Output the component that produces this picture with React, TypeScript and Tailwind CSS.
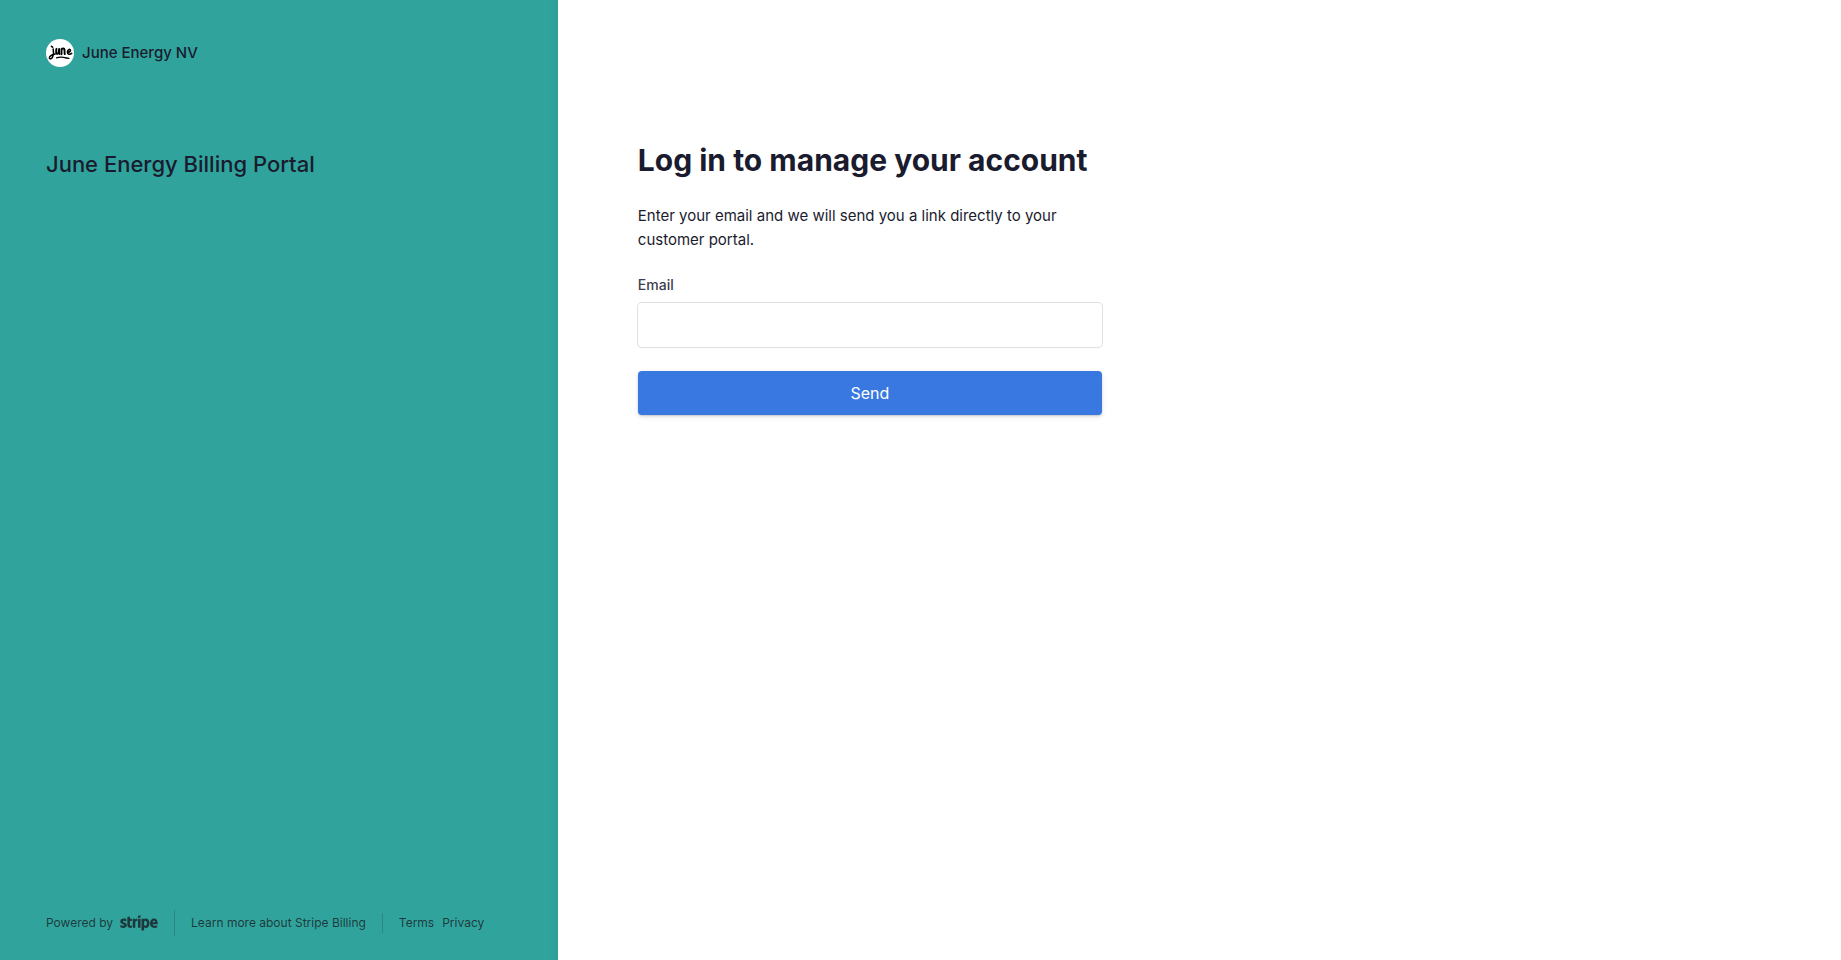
import { FaStripe } from "react-icons/fa";

const JuneLogo = () => {
  return (
    <svg
      viewBox="0 0 28 28"
      className="size-7 shrink-0 rounded-full bg-white"
      fill="none"
      stroke="#000"
      strokeWidth="1.9"
      strokeLinecap="round"
      strokeLinejoin="round"
      aria-hidden="true"
    >
      <path
        strokeWidth="1.5"
        d="M7.200 10c.5 2.600.3 6.200-.7 8.200-1 2-2.900 2.200-3.100.7-.1-2 2.200-3.200 5.800-4"
      />
      <path strokeWidth="1.500" d="M5.400 7.300l1.200.9" />
      <path d="M10.500 9.800c-.6 2-.6 5.200.5 5.200s1.800-2.600 2.100-5c-.1 2.200-.1 4 .4 5" />
      <path d="M15.500 15.200v-5c.9-.9 2.800-1 3 .5.200 1.400-.2 3.400.3 4.400" />
      <path
        strokeWidth="1.600"
        d="M21.400 13.300c1.600.2 3.400-.9 3-2.300-.6-1.300-2.900-.4-3 2 0 2.600 2.500 2.700 4.300 1.400"
      />
      <path strokeWidth="1.200" d="M10.500 18.900c2-.8 5-1 7-.5s3.500.8 5.500.9" />
    </svg>
  );
};

const Sidebar = () => {
  return (
    <aside className="flex w-full flex-col bg-[#30a49c] px-[46px] pt-[39px] pb-6 shadow-[inset_-10px_0_8px_-8px_rgba(0,0,0,0.06)] lg:w-[30.3%]">
      <div className="flex items-center gap-2">
        <JuneLogo />
        <span className="text-[15px] font-medium">June Energy NV</span>
      </div>

      <h2 className="mt-20 text-[22px] leading-[34px] font-medium">
        June Energy Billing Portal
      </h2>

      <footer className="mt-auto flex items-center whitespace-nowrap text-xs text-[#1a1b25]/80">
        <a
          href="#stripe"
          className="flex h-[26px] items-center gap-[7px] border-r border-[#1a1b25]/20 pr-4"
        >
          Powered by
          <FaStripe className="h-[30px] w-[38px]" aria-label="Stripe" />
        </a>
        <a
          href="#billing"
          className="border-r border-[#1a1b25]/20 px-4 leading-5"
        >
          Learn more about Stripe Billing
        </a>
        <nav className="flex gap-2 pl-4">
          <a href="#terms">Terms</a>
          <a href="#privacy">Privacy</a>
        </nav>
      </footer>
    </aside>
  );
};

const LoginForm = () => {
  return (
    <main className="flex-1 px-20 pt-[140px]">
      <div className="max-w-[464px]">
        <h1 className="text-3xl leading-10 font-bold">
          Log in to manage your account
        </h1>
        <p className="mt-6 text-[15px] leading-6">
          Enter your email and we will send you a link directly to your customer
          portal.
        </p>

        <form
          className="mt-[23px] flex flex-col"
          onSubmit={(e) => e.preventDefault()}
        >
          <label htmlFor="email" className="text-sm font-medium text-[#3c3d4d]">
            Email
          </label>
          <input
            id="email"
            type="email"
            name="email"
            className="mt-2 h-11 rounded px-3 shadow-xs ring-1 ring-[#e0e0e0] outline-none"
          />
          <button
            type="submit"
            className="mt-6 h-11 rounded bg-[#3878e0] text-base text-white shadow-[0_1px_2px_rgba(0,0,0,0.16),0_2px_5px_rgba(60,66,87,0.12)]"
          >
            Send
          </button>
        </form>
      </div>
    </main>
  );
};

export default function App() {
  return (
    <div className="flex min-h-screen flex-col bg-white font-['Inter',sans-serif] text-[#1a1b2e] lg:flex-row">
      <Sidebar />
      <LoginForm />
    </div>
  );
}
